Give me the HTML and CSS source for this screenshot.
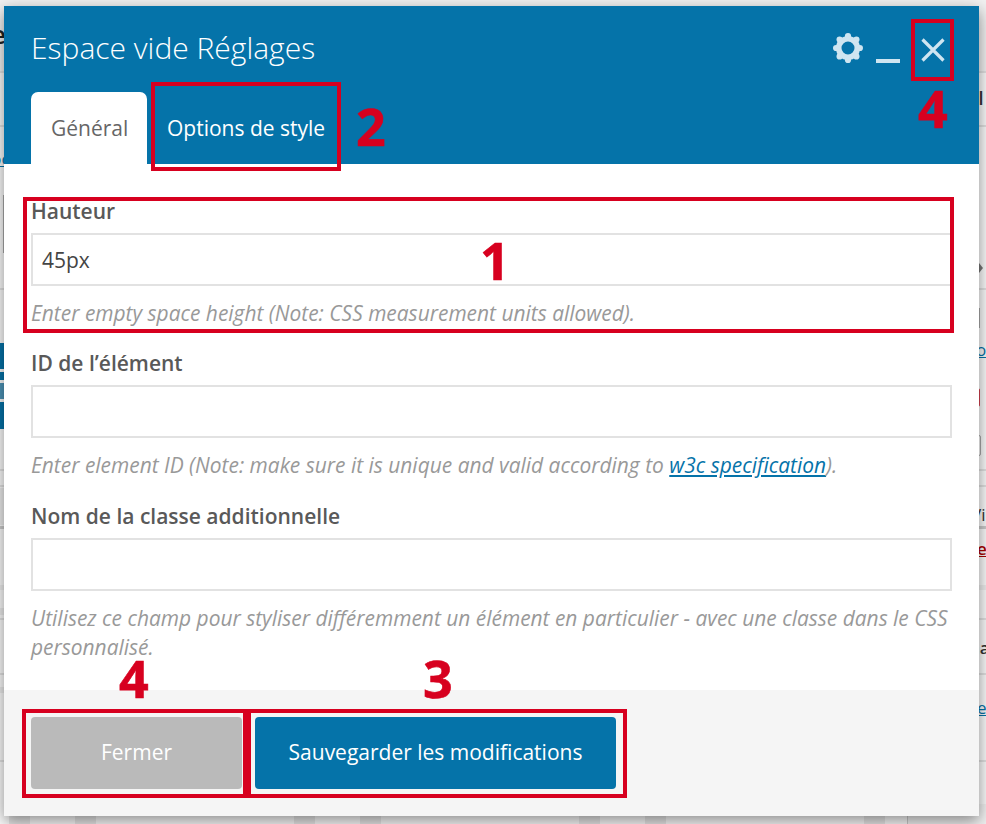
FILE: index.html
```html
<!DOCTYPE html>
<html lang="fr">
<head>
<meta charset="utf-8">
<title>Espace vide Réglages</title>
<link rel="stylesheet" href="styles.css">
</head>
<body>
<div class="backdrop" aria-hidden="true">
  <span class="bg top-band"></span>
  <span class="bg hline l1"></span>
  <span class="bg hline l2"></span>
  <span class="bg hline l3"></span>
  <span class="bg hline l4"></span>
  <span class="bg hline l5"></span>
  <span class="bg hline l6"></span>
  <span class="bg hline l7"></span>
  <span class="bg hline l8"></span>
  <span class="bg hline l9"></span>
  <span class="bg hline l10"></span>
  <span class="bg left-band lb1"></span>
  <span class="bg left-band lb2"></span>
  <span class="bg left-band lb3"></span>
  <span class="bg bg-title">e</span>
  <span class="bg bg-link bl1">bo</span>
  <span class="bg vbar vb1"></span>
  <span class="bg vbar vb2"></span>
  <span class="bg bg-blue b1"></span>
  <span class="bg bg-blue b2"></span>
  <span class="bg bg-blue b3"></span>
  <span class="bg bg-blue b4"></span>
  <span class="bg bg-arrow"></span>
  <span class="bg bg-link br1">oc</span>
  <span class="bg outline-red"></span>
  <span class="bg outline-gray"></span>
  <span class="bg bg-text vi">Vi</span>
  <span class="bg bg-redlink">ef</span>
  <span class="bg bg-text na">na</span>
  <span class="bg bg-link br2">ef</span>
  <span class="bg bg-text al">al</span>
  <div class="bg bottom-bars">
    <i class="bar b-a"></i><i class="bar b-b"></i><i class="bar b-c"></i><i class="bar b-b"></i>
    <i class="bar b-c"></i><i class="bar b-b"></i><i class="bar b-d"></i>
  </div>
  <span class="bg corner"></span>
</div>
<section class="modal">
  <header class="modal-head">
    <div class="title-row">
      <h1 class="modal-title">Espace vide Réglages</h1>
      <div class="controls">
        <svg class="icon-gear" viewBox="0 0 30 30" width="30" height="30">
          <circle class="gear-ring" cx="15" cy="15" r="9.300"/>
          <circle cx="15" cy="3.100" r="3.100"/><circle cx="15" cy="26.900" r="3.100"/>
          <circle cx="3.100" cy="15" r="3.100"/><circle cx="26.900" cy="15" r="3.100"/>
          <circle cx="6.600" cy="6.600" r="3.100"/><circle cx="23.400" cy="6.600" r="3.100"/>
          <circle cx="6.600" cy="23.400" r="3.100"/><circle cx="23.400" cy="23.400" r="3.100"/>
        </svg>
        <span class="icon-min"></span>
        <svg class="icon-close" viewBox="0 0 24 24" width="24" height="24"><path d="M1.500 1.500l21 21M22.500 1.500l-21 21"/></svg>
      </div>
    </div>
    <nav class="tabs">
      <a class="tab tab-active">Général</a>
      <a class="tab">Options de style</a>
    </nav>
  </header>
  <div class="modal-body">
    <div class="field">
      <label class="field-label">Hauteur</label>
      <div class="field-input">45px</div>
      <p class="field-help">Enter empty space height (Note: CSS measurement units allowed).</p>
    </div>
    <div class="field field-wide">
      <label class="field-label">ID de l’élément</label>
      <div class="field-input"></div>
      <p class="field-help">Enter element ID (Note: make sure it is unique and valid according to <a class="help-link">w3c specification</a>).</p>
    </div>
    <div class="field">
      <label class="field-label">Nom de la classe additionnelle</label>
      <div class="field-input"></div>
      <p class="field-help">Utilisez ce champ pour styliser différemment un élément en particulier - avec une classe dans le CSS personnalisé.</p>
    </div>
  </div>
  <footer class="modal-foot">
    <button class="btn btn-close">Fermer</button>
    <button class="btn btn-save">Sauvegarder les modifications</button>
  </footer>
</section>
<div class="mark box-field"></div>
<div class="mark box-tab"></div>
<div class="mark box-x"></div>
<div class="mark box-fermer"></div>
<div class="mark box-save"></div>
<span class="num n1">1</span>
<span class="num n2">2</span>
<span class="num n3">3</span>
<span class="num n4a">4</span>
<span class="num n4b">4</span>
</body>
</html>
```
FILE: styles.css
```css
* { box-sizing: border-box; }
html, body { margin: 0; height: 824px; overflow: hidden; }
body { position: relative; background: #fbfbfb; font-family: "Open Sans", sans-serif; color: #555; }

.backdrop { position: absolute; inset: 0; overflow: hidden; }
.bg { position: absolute; }
.top-band { left: 0; top: 0; width: 986px; height: 72px; background: #f1f1f1; }
.hline { left: 0; width: 986px; height: 2px; background: #e2e2e2; }
.l1 { top: 71px; } .l2 { top: 125px; } .l3 { top: 288px; }
.l4 { top: 469px; } .l5 { top: 485px; } .l6 { top: 526px; height: 3px; background: #ccc; }
.l7 { top: 585px; background: #eee; height: 5px; } .l8 { top: 618px; } .l9 { top: 673px; } .l10 { top: 760px; }
.left-band { left: 0; width: 4px; background: #ececec; }
.lb1 { top: 488px; height: 37px; } .lb2 { top: 608px; height: 7px; } .lb3 { top: 687px; height: 6px; }
.vbar { width: 1px; background: #aaa; }
.vb1 { left: 3px; top: 195px; height: 58px; }
.vb2 { left: 979px; top: 308px; height: 20px; }
.bg-title { left: -9px; top: 16px; font-size: 26px; color: #222; font-weight: 600; }
.bg-link { font-size: 17px; color: #0573a9; text-decoration: underline; }
.bl1 { left: -9px; top: 147px; }
.bg-blue { left: 0; width: 4px; background: #0573a9; }
.b1 { top: 343px; height: 26px; } .b2 { top: 372px; height: 8px; }
.b3 { top: 383px; height: 16px; background: #4d94b8; } .b4 { top: 402px; height: 27px; }
.bg-arrow { left: 979px; top: 263px; width: 0; height: 0; border-left: 4px solid #777; border-top: 5px solid transparent; border-bottom: 5px solid transparent; }
.br1 { left: 976px; top: 338px; }
.outline-red { left: 970px; top: 388px; width: 10px; height: 19px; border: 1px solid #d7404f; border-radius: 2px; }
.outline-gray { left: 970px; top: 435px; width: 11px; height: 21px; border: 1px solid #aaa; border-radius: 2px; }
.bg-text { font-size: 17px; color: #333; }
.vi { left: 971px; top: 503px; }
.bg-redlink { left: 977px; top: 537px; font-size: 17px; color: #a00; font-weight: 600; text-decoration: underline; }
.na { left: 969px; top: 636px; font-weight: 600; }
.br2 { left: 977px; top: 696px; }
.al { left: 968px; top: 86px; font-weight: 600; font-size: 18px; }
.bottom-bars { left: 9px; top: 804px; width: 900px; height: 20px; display: flex; }
.bar { display: block; height: 20px; width: 21px; background: #e8e8e8; }
.b-a { margin-right: 45px; }
.b-b { margin-right: 198px; }
.b-c { margin-right: 45px; }
.corner { left: 907px; top: 804px; width: 79px; height: 20px; background: #f1f1f1; border-left: 1px solid #ccc; }

.modal { position: absolute; left: 4px; top: 6px; width: 975px; height: 810px; background: #fff; box-shadow: 0 5px 15px rgba(0,0,0,.45); display: flex; flex-direction: column; }
.modal-head { height: 158px; background: #0573a9; display: flex; flex-direction: column; padding-left: 27px; }
.title-row { display: flex; justify-content: space-between; align-items: center; height: 86px; padding-right: 34px; }
.modal-title { margin: -3px 0 0; font-size: 30px; font-weight: 300; color: #fff; line-height: 40px; }
.controls { display: flex; align-items: center; margin-top: 1px; }
.icon-gear { fill: #cfe5f1; display: block; margin-top: -3px; }
.gear-ring { fill: none; stroke: #cfe5f1; stroke-width: 5.600; }
.icon-min { width: 24px; height: 4px; background: #cfe5f1; margin: 23px 21px 0 13px; }
.icon-close { fill: none; stroke: #cfe5f1; stroke-width: 3.200; display: block; }
.tabs { display: flex; height: 72px; }
.tab { font-size: 21px; padding: 22px 20px 0; color: #fff; line-height: 28px; }
.tab-active { background: #fff; color: #666; border-radius: 7px 7px 0 0; width: 116px; }

.modal-body { flex: 1; padding: 33px 27px 0; }
.field-label { display: block; font-size: 21px; font-weight: 600; color: #595959; line-height: 28px; }
.field-input { height: 53px; margin-top: 8px; border: 2px solid #e2e2e2; padding: 0 9px; font-size: 21px; line-height: 50px; color: #444; background: #fff; }
.field-help { margin: 13px 0 21px; font-size: 20.930px; font-style: italic; color: #999; line-height: 29px; font-weight: 400; }
.field-wide .field-help { margin-bottom: 22px; }
.help-link { color: #0573a9; text-decoration: underline; }

.modal-foot { height: 126px; background: #f5f5f5; display: flex; gap: 13px; padding: 27px; }
.btn { height: 72px; border: 0; border-radius: 4px; color: #fff; font: 400 21px "Open Sans", sans-serif; padding: 0 0 2px; }
.btn-close { width: 211px; background: #bababa; }
.btn-save { width: 361px; background: #0573a9; }

.mark { position: absolute; border: 4px solid #d7001f; }
.box-field { left: 23px; top: 197px; width: 931px; height: 136px; }
.box-tab { left: 151px; top: 82px; width: 190px; height: 89px; }
.box-x { left: 911px; top: 19px; width: 43px; height: 62px; }
.box-fermer { left: 22px; top: 709px; width: 225px; height: 89px; }
.box-save { left: 247px; top: 709px; width: 380px; height: 89px; }
.num { position: absolute; font-family: "Open Sans", sans-serif; font-weight: 700; font-size: 52px; line-height: 52px; color: #d7001f; -webkit-text-stroke: .6px #d7001f; }
.n1 { left: 480px; top: 234px; }
.n2 { left: 356px; top: 100px; }
.n3 { left: 423px; top: 652px; }
.n4a { left: 918px; top: 82px; }
.n4b { left: 119px; top: 652px; }
```
